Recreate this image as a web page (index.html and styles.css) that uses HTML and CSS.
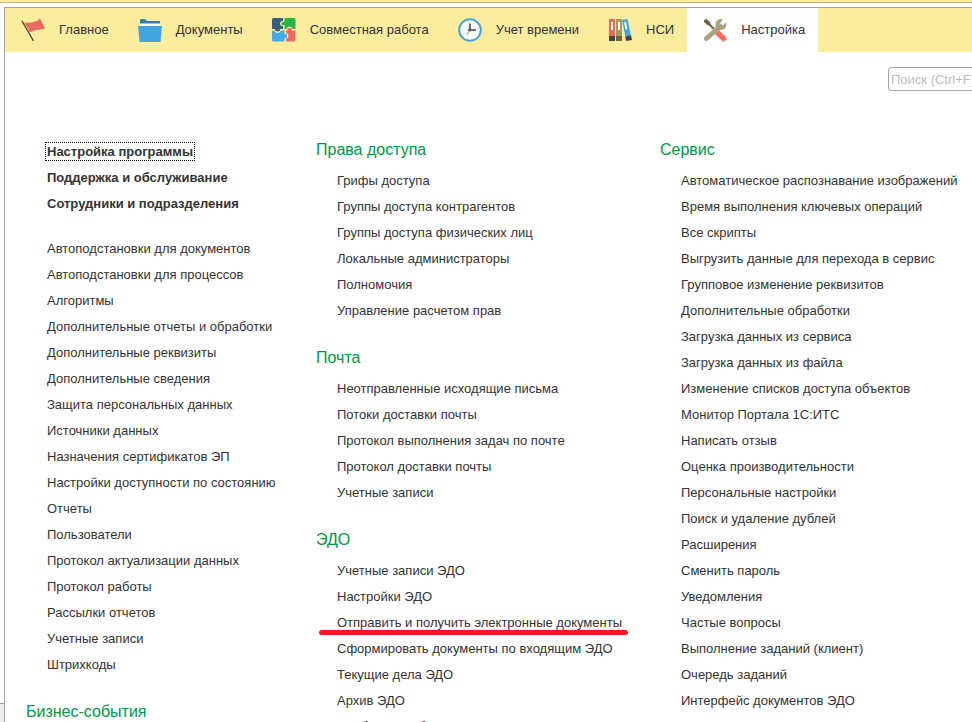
FILE: index.html
```html
<!DOCTYPE html>
<html lang="ru">
<head>
<meta charset="utf-8">
<title>Настройка</title>
<link rel="stylesheet" href="styles.css">
</head>
<body>
<div class="app">
  <div class="topstrip"></div>
  <div class="rail"></div>
  <div class="window">
    <nav class="tabs" aria-label="Разделы">
      <a class="tab" href="#">
        <svg class="icon" viewBox="0 0 24 24"><path d="M3 4C7 6 12 4 16 3L19 0.500L24 10C18 13 14 11 9 14.500Z" fill="#e96b5e"/><path d="M1 3L12.500 23" stroke="#4b453f" stroke-width="1.400"/></svg>
        <span>Главное</span></a>
      <a class="tab" href="#">
        <svg class="icon" viewBox="0 0 24 24"><path d="M2 7V2Q2 1 3 1H7L9 3H22V7Z" fill="#3480ab"/><path d="M2 5.500H22V8H2Z" fill="#fff"/><path d="M0 8H24L22.500 24H1.500Z" fill="#43a5df"/></svg>
        <span>Документы</span></a>
      <a class="tab" href="#">
        <svg class="icon" viewBox="0 0 24 24"><path d="M0 1.500Q0 0 1.500 0H11V3Q8 2.500 8 5.500T11 8V11H8Q8 13.500 5.500 13.500T3 11H0Z" fill="#38607e"/><path d="M12.500 0H22Q23.500 0 23.500 1.500V11H20.500Q20 8.500 17.500 8.500T15 11H12.500V7Q9.500 8 9.500 5.500T12.500 4Z" fill="#27b449"/><path d="M0 12.500H2Q3 15 5.500 15T9 12.500H12.500V16Q15 15 15 18T12.500 20V23.500H1.500Q0 23.500 0 22Z" fill="#44aae8"/><path d="M14 12.500H15.500Q15 10 17.500 10T20 12.500H23.500V22Q23.500 23.500 22 23.500H14V21Q16.500 20 16.500 18T14 14.500Z" fill="#ec6c60"/></svg>
        <span>Совместная работа</span></a>
      <a class="tab" href="#">
        <svg class="icon" viewBox="0 0 24 24"><circle cx="12" cy="12" r="10.800" fill="#fff" stroke="#43a5df" stroke-width="2"/><path d="M12 5.500V13.500M10 12H18" stroke="#34424c" stroke-width="1.600"/><path d="M12 12L8.500 17" stroke="#ec6c60"/></svg>
        <span>Учет времени</span></a>
      <a class="tab" href="#">
        <svg class="icon" viewBox="0 0 24 24"><path d="M1 1H7V19H1Z" fill="#e96b5e"/><path d="M8 1H14V19H8Z" fill="#a39a62"/><path d="M14 2L19.500 1L23 18L17.500 19Z" fill="#43a5df"/><path d="M1 18H7V23H1ZM17.300 18.500L23 17.500L24 22L18 23Z" fill="#444"/><path d="M8 18H14V23H8Z" fill="#6a623c"/><path d="M3 4H5V12H3ZM10 4H12V12H10ZM16 4.500L18 4L19.500 11L17.500 11.500Z" fill="#fff"/></svg>
        <span>НСИ</span></a>
      <a class="tab active" href="#" aria-current="page">
        <svg class="icon" viewBox="0 0 24 24"><path d="M4 4L11 11" stroke="#6b6442" stroke-width="2"/><path d="M1 2L3.500 1L7 4L7.500 7.500L4.500 7L1 4Z" fill="#6b6442"/><path d="M13 13L20.500 20.500" stroke="#ff6e61" stroke-width="5.500" stroke-linecap="round"/><path d="M3.500 20.500L17 8.500" stroke="#aaa27c" stroke-width="5" stroke-linecap="round"/><path d="M20 1Q12.500 0.500 12.500 6.500Q13 12 18.500 12Q24 11 23.500 4L20 7.500L17 5.500Z" fill="#aaa27c"/></svg>
        <span>Настройка</span></a>
    </nav>
    <div class="searchbar"><input class="search" type="text" aria-label="Поиск" placeholder="Поиск (Ctrl+F)"></div>
    <main class="columns">
      <div class="column">
        <ul class="links strong">
          <li><a class="focused" href="#">Настройка программы</a></li>
          <li><a href="#">Поддержка и обслуживание</a></li>
          <li><a href="#">Сотрудники и подразделения</a></li>
        </ul>
        <ul class="links">
          <li><a href="#">Автоподстановки для документов</a></li>
          <li><a href="#">Автоподстановки для процессов</a></li>
          <li><a href="#">Алгоритмы</a></li>
          <li><a href="#">Дополнительные отчеты и обработки</a></li>
          <li><a href="#">Дополнительные реквизиты</a></li>
          <li><a href="#">Дополнительные сведения</a></li>
          <li><a href="#">Защита персональных данных</a></li>
          <li><a href="#">Источники данных</a></li>
          <li><a href="#">Назначения сертификатов ЭП</a></li>
          <li><a href="#">Настройки доступности по состоянию</a></li>
          <li><a href="#">Отчеты</a></li>
          <li><a href="#">Пользователи</a></li>
          <li><a href="#">Протокол актуализации данных</a></li>
          <li><a href="#">Протокол работы</a></li>
          <li><a href="#">Рассылки отчетов</a></li>
          <li><a href="#">Учетные записи</a></li>
          <li><a href="#">Штрихкоды</a></li>
        </ul>
        <h2>Бизнес-события</h2>
      </div>
      <div class="column">
        <h2>Права доступа</h2>
        <ul class="links">
          <li><a href="#">Грифы доступа</a></li>
          <li><a href="#">Группы доступа контрагентов</a></li>
          <li><a href="#">Группы доступа физических лиц</a></li>
          <li><a href="#">Локальные администраторы</a></li>
          <li><a href="#">Полномочия</a></li>
          <li><a href="#">Управление расчетом прав</a></li>
        </ul>
        <h2>Почта</h2>
        <ul class="links">
          <li><a href="#">Неотправленные исходящие письма</a></li>
          <li><a href="#">Потоки доставки почты</a></li>
          <li><a href="#">Протокол выполнения задач по почте</a></li>
          <li><a href="#">Протокол доставки почты</a></li>
          <li><a href="#">Учетные записи</a></li>
        </ul>
        <h2>ЭДО</h2>
        <ul class="links">
          <li><a href="#">Учетные записи ЭДО</a></li>
          <li><a href="#">Настройки ЭДО</a></li>
          <li><a class="marked" href="#">Отправить и получить электронные документы</a></li>
          <li><a href="#">Сформировать документы по входящим ЭДО</a></li>
          <li><a href="#">Текущие дела ЭДО</a></li>
          <li><a href="#">Архив ЭДО</a></li>
          <li><a href="#">Сообщения обмена ЭДО</a></li>
        </ul>
      </div>
      <div class="column">
        <h2>Сервис</h2>
        <ul class="links">
          <li><a href="#">Автоматическое распознавание изображений</a></li>
          <li><a href="#">Время выполнения ключевых операций</a></li>
          <li><a href="#">Все скрипты</a></li>
          <li><a href="#">Выгрузить данные для перехода в сервис</a></li>
          <li><a href="#">Групповое изменение реквизитов</a></li>
          <li><a href="#">Дополнительные обработки</a></li>
          <li><a href="#">Загрузка данных из сервиса</a></li>
          <li><a href="#">Загрузка данных из файла</a></li>
          <li><a href="#">Изменение списков доступа объектов</a></li>
          <li><a href="#">Монитор Портала 1С:ИТС</a></li>
          <li><a href="#">Написать отзыв</a></li>
          <li><a href="#">Оценка производительности</a></li>
          <li><a href="#">Персональные настройки</a></li>
          <li><a href="#">Поиск и удаление дублей</a></li>
          <li><a href="#">Расширения</a></li>
          <li><a href="#">Сменить пароль</a></li>
          <li><a href="#">Уведомления</a></li>
          <li><a href="#">Частые вопросы</a></li>
          <li><a href="#">Выполнение заданий (клиент)</a></li>
          <li><a href="#">Очередь заданий</a></li>
          <li><a href="#">Интерфейс документов ЭДО</a></li>
        </ul>
      </div>
    </main>
  </div>
</div>
</body>
</html>
```
FILE: styles.css
```css
* { box-sizing: border-box; }
body {
  margin: 0;
  background: #fff;
  color: #333;
  font: 13px/26px "Liberation Sans", Arial, sans-serif;
}
.app {
  display: grid;
  grid-template: 7px 1fr / 4px minmax(0, 1fr);
  height: 100vh;
  overflow: hidden;
}
.topstrip {
  grid-column: 1 / -1;
  height: 3px;
  background: #fbec9e;
  border-bottom: 1px solid #c8bb6b;
}
.rail {
  align-self: end;
  height: 19px;
  background: #f0f0f0;
  border-top: 1px solid #a0a0a0;
}
.window {
  min-height: 0;
  overflow: hidden;
  border-top: 1px solid #a0a0a0;
  border-left: 1px solid #a0a0a0;
}
.tabs {
  display: flex;
  height: 44px;
  background: #fbec9e;
}
.tab {
  display: flex;
  align-items: center;
  gap: 14px;
  padding: 0 13px 0 16px;
  color: #333;
  text-decoration: none;
  white-space: nowrap;
}
.tab.active { background: #fff; }
.icon { width: 24px; height: 24px; flex: none; fill: none; }
.searchbar {
  display: flex;
  justify-content: flex-end;
  padding-top: 15px;
  overflow: hidden;
}
.search {
  width: 124px;
  height: 24px;
  margin-right: -40px;
  padding: 0 2px;
  border: 1px solid #a6a6a6;
  border-radius: 3px;
  background: #fff;
  font: inherit;
  line-height: 20px;
}
.search::placeholder { color: #bcbcbc; opacity: 1; }
.columns {
  display: grid;
  grid-template-columns: 290px 344px minmax(0, 1fr);
  padding: 48px 0 0 21px;
}
h2 {
  margin: 0 0 7px;
  color: #009646;
  font-size: 16px;
  font-weight: 400;
  line-height: 22px;
}
.links {
  margin: 0 0 23px;
  padding: 0 0 0 21px;
  list-style: none;
}
.links li { height: 26px; white-space: nowrap; }
.links a { position: relative; color: #333; text-decoration: none; }
.links.strong { margin-bottom: 19px; font-weight: 700; }
.focused { outline: 1px dotted #000; outline-offset: 1px; }
.marked::after {
  content: "";
  position: absolute;
  left: -18px;
  right: -6px;
  bottom: -5px;
  height: 5px;
  border-radius: 3px;
  background: #ed1c24;
}
```
